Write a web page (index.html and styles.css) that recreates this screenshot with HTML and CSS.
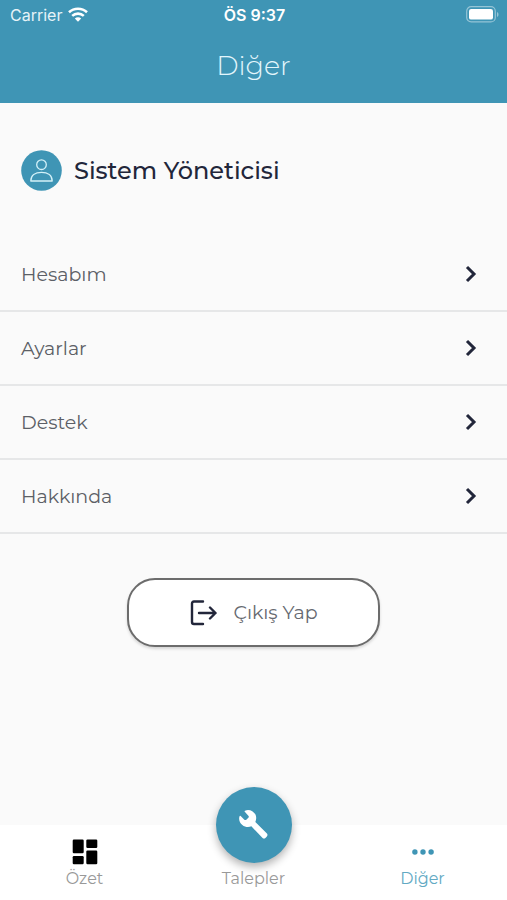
FILE: index.html
```html
<!DOCTYPE html>
<html lang="tr">
<head>
    <meta charset="UTF-8">
    <meta name="viewport" content="width=device-width, initial-scale=1.0">
    <title>Diğer</title>
    <link rel="stylesheet" href="styles.css">
</head>
<body>
    <header class="header">
        <div class="status-bar">
            <div class="carrier">
                <span>Carrier</span>
                <svg width="20" height="15" viewBox="0 0 20 15" fill="none" stroke="#fff" stroke-width="2.6">
                    <path d="M1 5.2C6 .6 14 .6 19 5.2"/>
                    <path d="M4.2 8.9c3.3-3 8.3-3 11.6 0"/>
                    <path d="M10 14.8 6.8 11.5c1.8-1.7 4.6-1.7 6.4 0z" fill="#fff" stroke="none"/>
                </svg>
            </div>
            <span class="time">ÖS 9:37</span>
            <svg class="battery" width="33" height="17" viewBox="0 0 33 17">
                <rect x=".7" y=".7" width="28.6" height="15.2" rx="4.5" fill="none" stroke="#fff" stroke-opacity=".45" stroke-width="1.2"/>
                <rect x="3" y="3" width="24" height="10.6" rx="2.2" fill="#fff"/>
                <path d="M31 6v5c2-.8 2-4.2 0-5z" fill="#fff" fill-opacity=".45"/>
            </svg>
        </div>
        <h1>Diğer</h1>
    </header>

    <main class="content">
        <section class="profile">
            <svg width="41" height="41" viewBox="0 0 41 41">
                <circle cx="20.5" cy="20.5" r="20.3" fill="#3f95b5"/>
                <g fill="none" stroke="#d3f1f8" stroke-width="1.3" stroke-linejoin="round">
                    <circle cx="20.5" cy="14.7" r="4.8"/>
                    <path d="M9.8 31c0-5.5 4.4-8.6 10.7-8.6S31.2 25.5 31.2 31z"/>
                </g>
            </svg>
            <h2>Sistem Yöneticisi</h2>
        </section>

        <nav class="menu">
            <a href="#hesabim">Hesabım
                <svg width="14" height="18" viewBox="0 0 14 18"><path d="M3 2l7 7-7 7"/></svg>
            </a>
            <a href="#ayarlar">Ayarlar
                <svg width="14" height="18" viewBox="0 0 14 18"><path d="M3 2l7 7-7 7"/></svg>
            </a>
            <a href="#destek">Destek
                <svg width="14" height="18" viewBox="0 0 14 18"><path d="M3 2l7 7-7 7"/></svg>
            </a>
            <a href="#hakkinda">Hakkında
                <svg width="14" height="18" viewBox="0 0 14 18"><path d="M3 2l7 7-7 7"/></svg>
            </a>
        </nav>

        <button type="button" class="logout">
            <svg width="28" height="26" viewBox="0 0 28 26" fill="none" stroke="#22263a" stroke-width="2.4" stroke-linecap="round" stroke-linejoin="round">
                <path d="M14 1.500H5Q3 1.500 3 3.500v18.500Q3 24 5 24H14"/>
                <path d="M10 13h16.500M21 7.500l5.500 5.500-5.500 5.500"/>
            </svg>
            Çıkış Yap
        </button>
    </main>

    <nav class="tab-bar">
        <a href="#ozet">
            <svg width="26" height="26" viewBox="0 0 26 26" fill="#000">
                <rect x=".7" y=".5" width="11" height="13.8" rx="1.2"/>
                <rect x="14.3" y=".5" width="11" height="8.5" rx="1.2"/>
                <rect x=".7" y="17" width="11" height="8.2" rx="1.2"/>
                <rect x="14.3" y="11.5" width="11" height="13.7" rx="1.2"/>
            </svg>
            Özet
        </a>
        <a href="#talepler">
            <span class="fab">
                <svg width="40" height="40" viewBox="0 0 120 120" fill="#fff">
                    <path d="M33 17C45 11 58 18 64 28C68 36 67 44 64 51L98 85Q103 90 98 95L95 98Q90 103 85 98L52 64C44 68 33 67 25 60C17 53 13 43 17 33Q18 31 20 33L31 44Q34 46 37 44L43 38Q46 35 43 32L33 21Q30 19 33 17Z"/>
                </svg>
            </span>
            Talepler
        </a>
        <a href="#diger" class="active">
            <svg width="26" height="26" viewBox="0 0 26 26" fill="#3f95b5">
                <circle cx="4.9" cy="13" r="2.7"/>
                <circle cx="13" cy="13" r="2.7"/>
                <circle cx="21.1" cy="13" r="2.7"/>
            </svg>
            Diğer
        </a>
    </nav>
</body>
</html>
```

FILE: styles.css
```css
* {
    box-sizing: border-box;
}

body {
    margin: 0;
    min-height: 100vh;
    display: flex;
    flex-direction: column;
    font-family: Montserrat, Inter, "Open Sans", sans-serif;
    background-color: #fafafa;
    color: #22263a;
}

a {
    color: inherit;
    text-decoration: none;
}

.header {
    height: 103px;
    background-color: #3f95b5;
    color: #fff;
}

.status-bar {
    display: grid;
    grid-template-columns: 1fr auto 1fr;
    align-items: center;
    height: 29px;
    padding: 0 8px 0 10px;
    font-family: Inter, sans-serif;
    font-size: 16px;
}

.carrier {
    display: flex;
    align-items: center;
    gap: 6px;
    color: #e6f3f8;
}

.time {
    font-weight: 600;
}

.battery {
    justify-self: end;
}

.header h1 {
    margin: 0;
    text-align: center;
    font-size: 27px;
    line-height: 74px;
    font-weight: 300;
    color: #e3f6fc;
}

.content {
    flex: 1;
}

.profile {
    display: flex;
    align-items: center;
    gap: 12px;
    height: 135px;
    padding: 0 21px;
}

.profile h2 {
    margin: 0;
    font-size: 24px;
    font-weight: 500;
}

.menu a {
    display: flex;
    align-items: center;
    justify-content: space-between;
    height: 74px;
    padding: 0 29px 0 21px;
    border-bottom: 2px solid #e6e7e8;
    font-size: 19px;
    color: #5c5f66;
}

.menu svg {
    fill: none;
    stroke: #22263a;
    stroke-width: 3;
}

.logout {
    display: flex;
    align-items: center;
    justify-content: center;
    gap: 16px;
    width: 50%;
    height: 69px;
    margin: 44px auto;
    border: 2px solid #6c6c6c;
    border-radius: 28px;
    background-color: #fff;
    box-shadow: 0 2px 3px rgba(0, 0, 0, 0.15);
    font-family: inherit;
    font-size: 19px;
    color: #666970;
    cursor: pointer;
}

.tab-bar {
    display: grid;
    grid-template-columns: repeat(3, 1fr);
    grid-template-rows: 75px;
    align-items: end;
    background-color: #fff;
}

.tab-bar a {
    display: flex;
    flex-direction: column;
    align-items: center;
    gap: 3px;
    padding-bottom: 10px;
    font-size: 16px;
    line-height: 22px;
    color: #999;
}

.tab-bar .active {
    color: #62a9c3;
}

/* taller than the bar, so it sticks out above it */
.fab {
    display: flex;
    align-items: center;
    justify-content: center;
    width: 76px;
    height: 76px;
    margin-bottom: 2px;
    border-radius: 50%;
    background-color: #3f95b5;
    box-shadow: 0 4px 8px rgba(0, 0, 0, 0.3);
}
```
